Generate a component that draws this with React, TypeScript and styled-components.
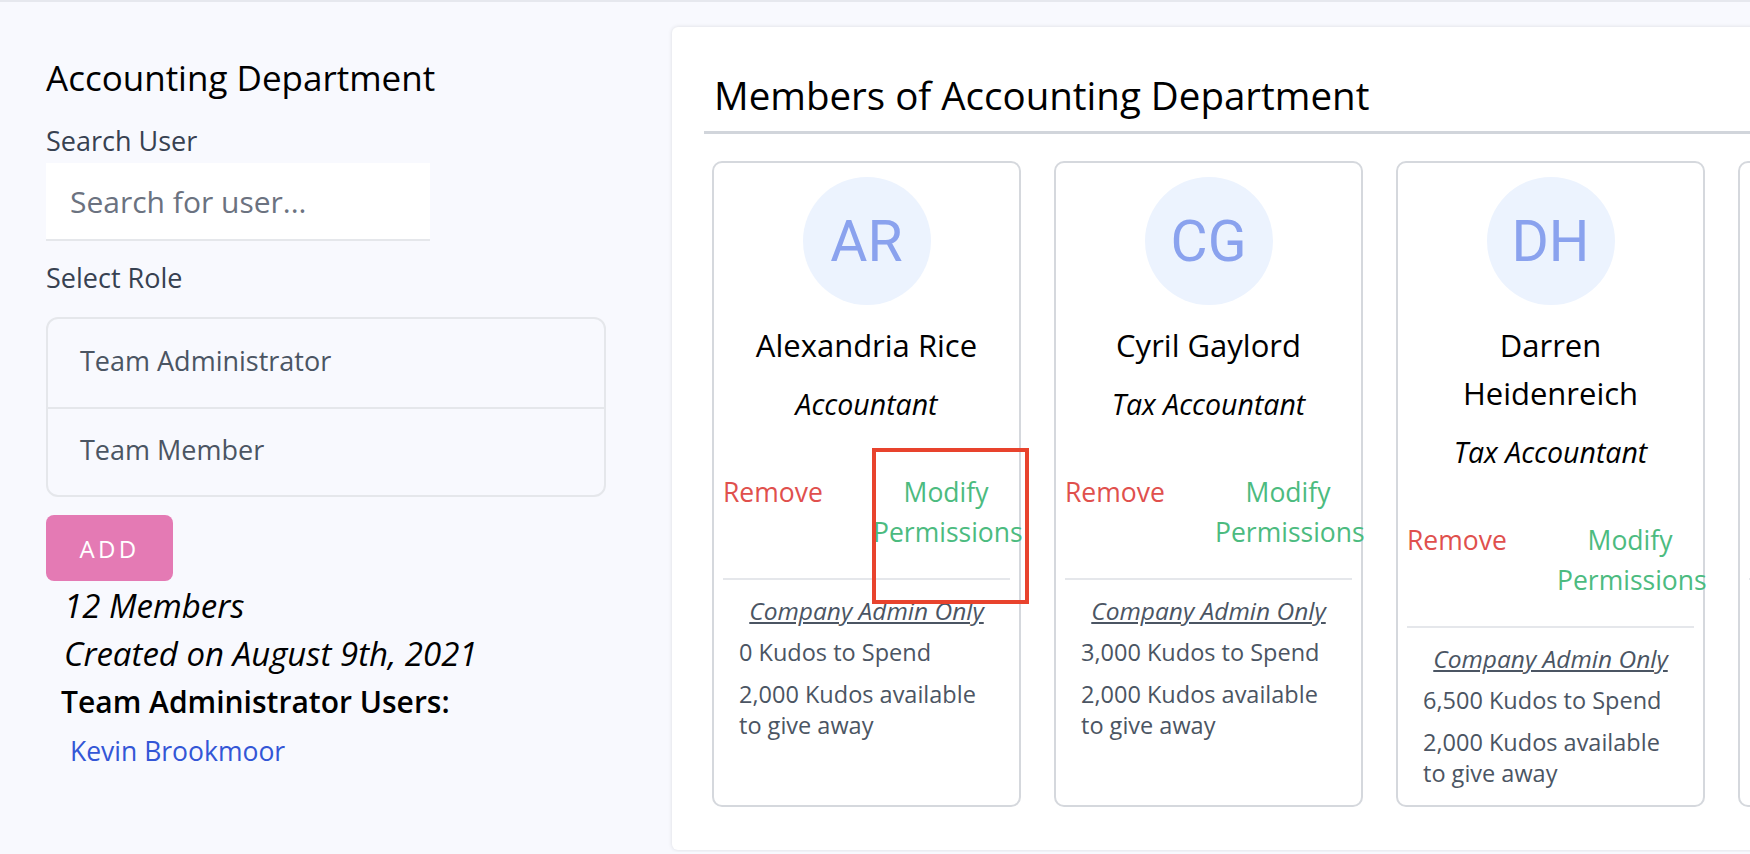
import React from "react";
import styled, { createGlobalStyle } from "styled-components";

const Global = createGlobalStyle`
  html, body { margin: 0; padding: 0; }
  body {
    background: #f8f9fe;
    font-family: "Open Sans", "Noto Sans", sans-serif;
    overflow: hidden;
  }
  * { box-sizing: border-box; }
`;

const Page = styled.div`
  border-top: 2px solid #e6e8ee;
  display: flex;
  align-items: flex-start;
  width: 1750px;
  height: 852px;
`;

const LeftCol = styled.aside`
  flex: 0 0 606px;
  padding: 55px 0 0 46px;
  display: flex;
  flex-direction: column;
`;

const DeptTitle = styled.h2`
  margin: 0;
  font-size: 35px;
  line-height: 42px;
  font-weight: 400;
  color: #000;
`;

const Label = styled.label<{ $top: number }>`
  display: block;
  margin-top: ${(p) => p.$top}px;
  font-size: 27px;
  line-height: 36px;
  color: #374151;
`;

const SearchInput = styled.input`
  display: block;
  margin-top: 4px;
  width: 384px;
  height: 78px;
  border: none;
  border-bottom: 2px solid #e5e7eb;
  background: #fff;
  padding: 0 24px;
  font-family: inherit;
  font-size: 30px;
  color: #111;
  outline: none;
  &::placeholder { color: #6b7280; }
`;

const RoleList = styled.div`
  margin-top: 21px;
  width: 560px;
  border: 2px solid #e5e7eb;
  border-radius: 12px;
  display: flex;
  flex-direction: column;
`;

const RoleOption = styled.div`
  height: 88px;
  display: flex;
  align-items: center;
  padding: 0 0 5px 32px;
  font-size: 27px;
  color: #4b5563;
  & + & { border-top: 2px solid #e5e7eb; }
`;

const AddButton = styled.button`
  margin-top: 18px;
  width: 127px;
  height: 66px;
  border: none;
  border-radius: 8px;
  background: #e47ab4;
  color: #fff;
  font-family: inherit;
  font-size: 24px;
  letter-spacing: 0.14em;
  cursor: pointer;
`;

const Meta = styled.div`
  padding-left: 18px;
  margin-top: 1px;
  display: flex;
  flex-direction: column;
`;

const MetaLine = styled.div<{ $italic?: boolean; $strong?: boolean; $indent?: number }>`
  font-size: ${(p) => (p.$strong ? 30 : 33)}px;
  line-height: 48px;
  color: #000;
  font-style: ${(p) => (p.$italic ? "italic" : "normal")};
  font-weight: ${(p) => (p.$strong ? 600 : 400)};
  margin-left: ${(p) => p.$indent ?? 0}px;
`;

const AdminLink = styled.a`
  margin-left: 6px;
  font-size: 26.5px;
  line-height: 50px;
  color: #3356d6;
  text-decoration: none;
`;

const Panel = styled.section`
  margin: 25px 0 0 66px;
  flex: 0 0 1120px;
  height: 823px;
  background: #fff;
  border-radius: 6px;
  box-shadow: 0 0 4px rgba(0, 0, 0, 0.12);
  padding: 0 0 0 32px;
  display: flex;
  flex-direction: column;
`;

const PanelHeader = styled.div`
  padding: 44px 10px 12px;
  border-bottom: 3px solid #d1d5db;
`;

const PanelTitle = styled.h1`
  margin: 0;
  font-size: 38.5px;
  line-height: 48px;
  font-weight: 400;
  color: #000;
`;

const CardRow = styled.div`
  margin-top: 27px;
  padding-left: 8px;
  display: flex;
  gap: 33px;
  align-items: stretch;
`;

const Card = styled.div`
  position: relative;
  flex: 0 0 309px;
  border: 2px solid #d5d8dd;
  border-radius: 10px;
  padding: 14px 9px 16px;
  display: flex;
  flex-direction: column;
  align-items: center;
`;

const Avatar = styled.div`
  width: 128px;
  height: 128px;
  border-radius: 50%;
  background: #ecf3fe;
  color: #8aa2ee;
  font-family: Roboto, "Liberation Sans", sans-serif;
  font-size: 57px;
  display: flex;
  align-items: center;
  justify-content: center;
`;

const Name = styled.div`
  margin-top: 16px;
  width: 230px;
  text-align: center;
  font-size: 31px;
  line-height: 48px;
  color: #000;
`;

const Role = styled.div`
  margin-top: 17px;
  font-size: 28.5px;
  line-height: 36px;
  font-style: italic;
  color: #000;
`;

const Actions = styled.div`
  margin-top: 50px;
  align-self: stretch;
  display: flex;
  justify-content: space-between;
  align-items: flex-start;
`;

const ActionButton = styled.button<{ $tone: "danger" | "success" }>`
  background: none;
  border: none;
  padding: 0;
  font-family: inherit;
  font-size: 26.5px;
  line-height: 40px;
  cursor: pointer;
  color: ${(p) => (p.$tone === "danger" ? "#e0504d" : "#4cbb7f")};
  ${(p) =>
    p.$tone === "success"
      ? "width: 146px; flex-shrink: 0; text-align: center; margin-right: -9px;"
      : ""}
`;

const Divider = styled.hr`
  align-self: stretch;
  margin: 26px 0 0;
  border: none;
  border-top: 2px solid #e5e7eb;
`;

const Stats = styled.div`
  align-self: stretch;
  padding: 15px 16px 0;
  display: flex;
  flex-direction: column;
`;

const AdminOnly = styled.div`
  text-align: center;
  font-size: 24.5px;
  line-height: 32px;
  font-style: italic;
  text-decoration: underline;
  color: #4b5563;
`;

const StatLine = styled.div`
  margin-top: 10px;
  font-size: 23.5px;
  line-height: 31px;
  color: #4b5563;
  & + & { margin-top: 11px; }
`;

const Annotation = styled.div`
  position: absolute;
  left: 158px;
  top: 285px;
  width: 157px;
  height: 156px;
  border: 4px solid #e8432d;
  pointer-events: none;
`;

type Member = {
  initials: string;
  name: string;
  role: string;
  spend: string;
  give: string;
};

const members: Member[] = [
  { initials: "AR", name: "Alexandria Rice", role: "Accountant", spend: "0", give: "2,000" },
  { initials: "CG", name: "Cyril Gaylord", role: "Tax Accountant", spend: "3,000", give: "2,000" },
  { initials: "DH", name: "Darren Heidenreich", role: "Tax Accountant", spend: "6,500", give: "2,000" },
  { initials: "EB", name: "Emma Bauch", role: "Auditor", spend: "1,000", give: "2,000" },
];

export default function App() {
  return (
    <>
      <Global />
      <Page>
        <LeftCol>
          <DeptTitle>Accounting Department</DeptTitle>
          <Label $top={24}>Search User</Label>
          <SearchInput placeholder="Search for user..." />
          <Label $top={19}>Select Role</Label>
          <RoleList>
            <RoleOption>Team Administrator</RoleOption>
            <RoleOption>Team Member</RoleOption>
          </RoleList>
          <AddButton>ADD</AddButton>
          <Meta>
            <MetaLine $italic>12 Members</MetaLine>
            <MetaLine $italic>Created on August 9th, 2021</MetaLine>
            <MetaLine $strong $indent={-3}>Team Administrator Users:</MetaLine>
            <AdminLink href="#">Kevin Brookmoor</AdminLink>
          </Meta>
        </LeftCol>
        <Panel>
          <PanelHeader>
            <PanelTitle>Members of Accounting Department</PanelTitle>
          </PanelHeader>
          <CardRow>
            {members.map((m, i) => (
              <Card key={m.initials}>
                <Avatar>{m.initials}</Avatar>
                <Name>{m.name}</Name>
                <Role>{m.role}</Role>
                <Actions>
                  <ActionButton $tone="danger">Remove</ActionButton>
                  <ActionButton $tone="success">Modify Permissions</ActionButton>
                </Actions>
                <Divider />
                <Stats>
                  <AdminOnly>Company Admin Only</AdminOnly>
                  <StatLine>{m.spend} Kudos to Spend</StatLine>
                  <StatLine>{m.give} Kudos available to give away</StatLine>
                </Stats>
                {i === 0 && <Annotation />}
              </Card>
            ))}
          </CardRow>
        </Panel>
      </Page>
    </>
  );
}
